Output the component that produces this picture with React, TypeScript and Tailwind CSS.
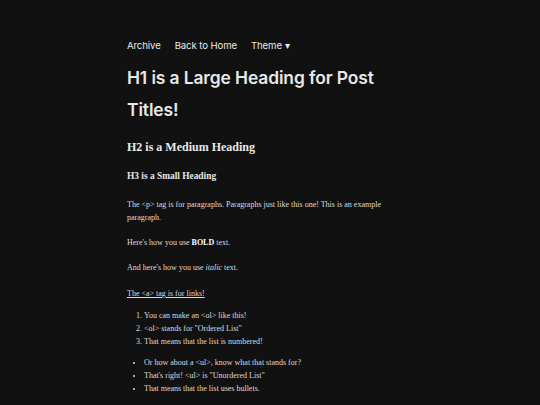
import React from 'react'

const sans = { fontFamily: 'Inter, "Noto Sans", sans-serif' }

export default function App() {
  return (
    <div className="min-h-[405px] bg-[#111111] text-[#e8e8e8]">
      <div className="mx-auto w-[286px] pt-[38px]">
        <nav className="flex gap-[14px] text-[9.6px] leading-[16px] tracking-[-0.1px]" style={sans}>
          <a>Archive</a>
          <a>Back to Home</a>
          <a>Theme ▾</a>
        </nav>
        <h1 className="mt-[8px] text-[17.4px] font-semibold leading-[32px] tracking-[-0.1px]" style={sans}>
          H1 is a Large Heading for Post Titles!
        </h1>
        <div className="font-['Liberation_Serif',serif] text-[#dcdcdc]">
          <h2 className="mt-[13px] text-[12px] font-bold leading-[16px] text-[#e8e8e8]">H2 is a Medium Heading</h2>
          <h3 className="mt-[14px] text-[9.4px] font-bold leading-[14px] text-[#e8e8e8]">H3 is a Small Heading</h3>
          <p className="mt-[15px] text-[8px] leading-[13px]">
            The &lt;p&gt; tag is for paragraphs. Paragraphs just like this one! This is an example paragraph.
          </p>
          <p className="mt-[12px] text-[8px] leading-[13px]">
            Here's how you use <b className="text-white">BOLD</b> text.
          </p>
          <p className="mt-[12px] text-[8px] leading-[13px]">
            And here's how you use <i>italic</i> text.
          </p>
          <p className="mt-[13px] text-[8px] leading-[13px]">
            <a className="underline">The &lt;a&gt; tag is for links!</a>
          </p>
          <ol className="mt-[9px] list-decimal pl-[17px] text-[8px] leading-[13px]">
            <li>You can make an &lt;ol&gt; like this!</li>
            <li>&lt;ol&gt; stands for "Ordered List"</li>
            <li>That means that the list is numbered!</li>
          </ol>
          <ul className="mt-[8px] list-disc pl-[17px] text-[8px] leading-[13px]">
            <li>Or how about a &lt;ul&gt;, know what that stands for?</li>
            <li>That's right! &lt;ul&gt; is "Unordered List"</li>
            <li>That means that the list uses bullets.</li>
          </ul>
        </div>
      </div>
    </div>
  )
}
